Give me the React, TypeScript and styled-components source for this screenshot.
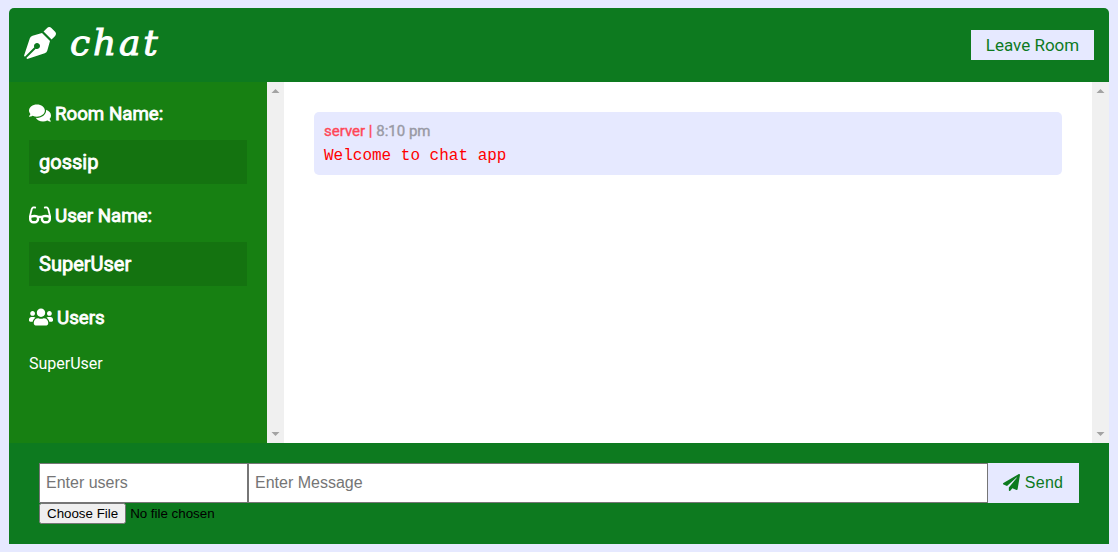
import React from 'react';
import styled, { createGlobalStyle } from 'styled-components';
import { FaComments, FaGlasses, FaPaperPlane, FaPenNib, FaUsers } from 'react-icons/fa';

const GlobalStyle = createGlobalStyle`
  * { box-sizing: border-box; margin: 0; padding: 0; }
  body {
    font-family: Roboto, sans-serif;
    font-size: 16px;
    background: #e6e9ff;
  }
  svg { display: block; flex: none; }
`;

const ChatContainer = styled.div`
  width: 1100px;
  height: 536px;
  margin: 8px auto;
  display: flex;
  flex-direction: column;
  border-radius: 5px 5px 0 0;
  overflow: hidden;
`;

const Header = styled.header`
  height: 74px;
  flex: none;
  padding: 0 15px;
  display: flex;
  align-items: center;
  justify-content: space-between;
  background: #0d7a1f;
  color: #fff;
`;

const Brand = styled.h1`
  display: flex;
  align-items: center;
  gap: 14px;
  height: 70px;
  padding-bottom: 4px;
  font: italic 400 36px/40px 'Lucida Handwriting', 'DejaVu Serif', cursive;
  letter-spacing: 2.8px;
  -webkit-text-stroke: 1px currentColor;
  svg { stroke: none; stroke-width: 0; }
`;

const LeaveButton = styled.a`
  width: 123px;
  text-align: center;
  padding-top: 1px;
  line-height: 29px;
  font-size: 17px;
  background: #e6e9ff;
  color: #0d7a1f;
`;

const Main = styled.main`
  height: 361px;
  flex: none;
  display: flex;
`;

const Sidebar = styled.aside`
  width: 258px;
  padding: 20px;
  background: #178012;
  color: #fff;
`;

const SideHeading = styled.h3`
  display: flex;
  align-items: center;
  gap: 4px;
  height: 23px;
  margin-bottom: 15px;
  font-size: 18.72px;
  font-weight: 400;
  -webkit-text-stroke: 0.8px currentColor;
  white-space: nowrap;
  svg { stroke: none; stroke-width: 0; margin-bottom: 1px; }
`;

const SideValue = styled.h2`
  height: 44px;
  padding: 0 10px;
  margin-bottom: 20px;
  line-height: 44px;
  font-size: 20px;
  font-weight: 400;
  -webkit-text-stroke: 0.8px currentColor;
  background: rgba(0, 0, 0, 0.1);
`;

const UserList = styled.ul`
  list-style: none;
  line-height: 20px;
  padding-top: 10px;
`;

const ScrollTrack = styled.div`
  width: 17px;
  flex: none;
  display: flex;
  flex-direction: column;
  justify-content: space-between;
  align-items: center;
  padding: 7px 0 7px;
  background: #f0f0f0;
`;

const Messages = styled.section`
  flex: 1;
  padding: 30px;
  background: #fff;
`;

const Message = styled.article`
  height: 63px;
  padding: 10px;
  border-radius: 5px;
  background: #e6e9ff;
`;

const Meta = styled.p`
  margin-bottom: 6px;
  font-size: 15px;
  line-height: 18px;
  color: #ff4757;
  -webkit-text-stroke: 0.4px currentColor;
`;

const Time = styled.span`
  color: #999aa5;
`;

const MessageText = styled.p`
  font: 16px/20px 'Liberation Mono', monospace;
  color: #f00;
`;

const Footer = styled.footer`
  height: 101px;
  flex: none;
  padding: 20px 30px;
  background: #0d7a1f;
`;

const FormRow = styled.div`
  display: flex;
  height: 40px;
`;

const TextField = styled.input<{ $width: number }>`
  width: ${(p) => p.$width}px;
  height: 40px;
  padding: 0 6px;
  border: 1px solid #767676;
  font: 16px 'Liberation Sans', sans-serif;
  background: #fff;
  &::placeholder { color: #757575; }
`;

const SendButton = styled.button`
  width: 91px;
  display: flex;
  align-items: center;
  justify-content: center;
  gap: 5px;
  padding: 0 1px 0 0;
  border: 0;
  font: 16px 'Liberation Sans', sans-serif;
  letter-spacing: 0.25px;
  background: #e6e9ff;
  color: #0d7a1f;
  svg { margin-bottom: 2px; }
`;

const FileField = styled.input`
  display: block;
  font: 13.333px 'Liberation Sans', sans-serif;
  color: #000;
`;

function Scrollbar() {
  return (
    <ScrollTrack>
      <svg width="9" height="4" viewBox="0 0 9 4"><path d="M.5 4 4.5 0l4 4z" fill="#a3a3a3" /></svg>
      <svg width="9" height="4" viewBox="0 0 9 4"><path d="M.5 0 4.5 4l4-4z" fill="#a3a3a3" /></svg>
    </ScrollTrack>
  );
}

export default function App() {
  return (
    <>
      <GlobalStyle />
      <ChatContainer>
        <Header>
          <Brand><FaPenNib size={32} />chat</Brand>
          <LeaveButton>Leave Room</LeaveButton>
        </Header>
        <Main>
          <Sidebar>
            <SideHeading><FaComments size={22} />Room Name:</SideHeading>
            <SideValue>gossip</SideValue>
            <SideHeading><FaGlasses size={22} />User Name:</SideHeading>
            <SideValue>SuperUser</SideValue>
            <SideHeading><FaUsers size={24} />Users</SideHeading>
            <UserList><li>SuperUser</li></UserList>
          </Sidebar>
          <Scrollbar />
          <Messages>
            <Message>
              <Meta>server | <Time>8:10 pm</Time></Meta>
              <MessageText>Welcome to chat app</MessageText>
            </Message>
          </Messages>
          <Scrollbar />
        </Main>
        <Footer>
          <FormRow>
            <TextField $width={209} placeholder="Enter users" />
            <TextField $width={740} placeholder="Enter Message" />
            <SendButton><FaPaperPlane size={17} />Send</SendButton>
          </FormRow>
          <FileField type="file" />
        </Footer>
      </ChatContainer>
    </>
  );
}
